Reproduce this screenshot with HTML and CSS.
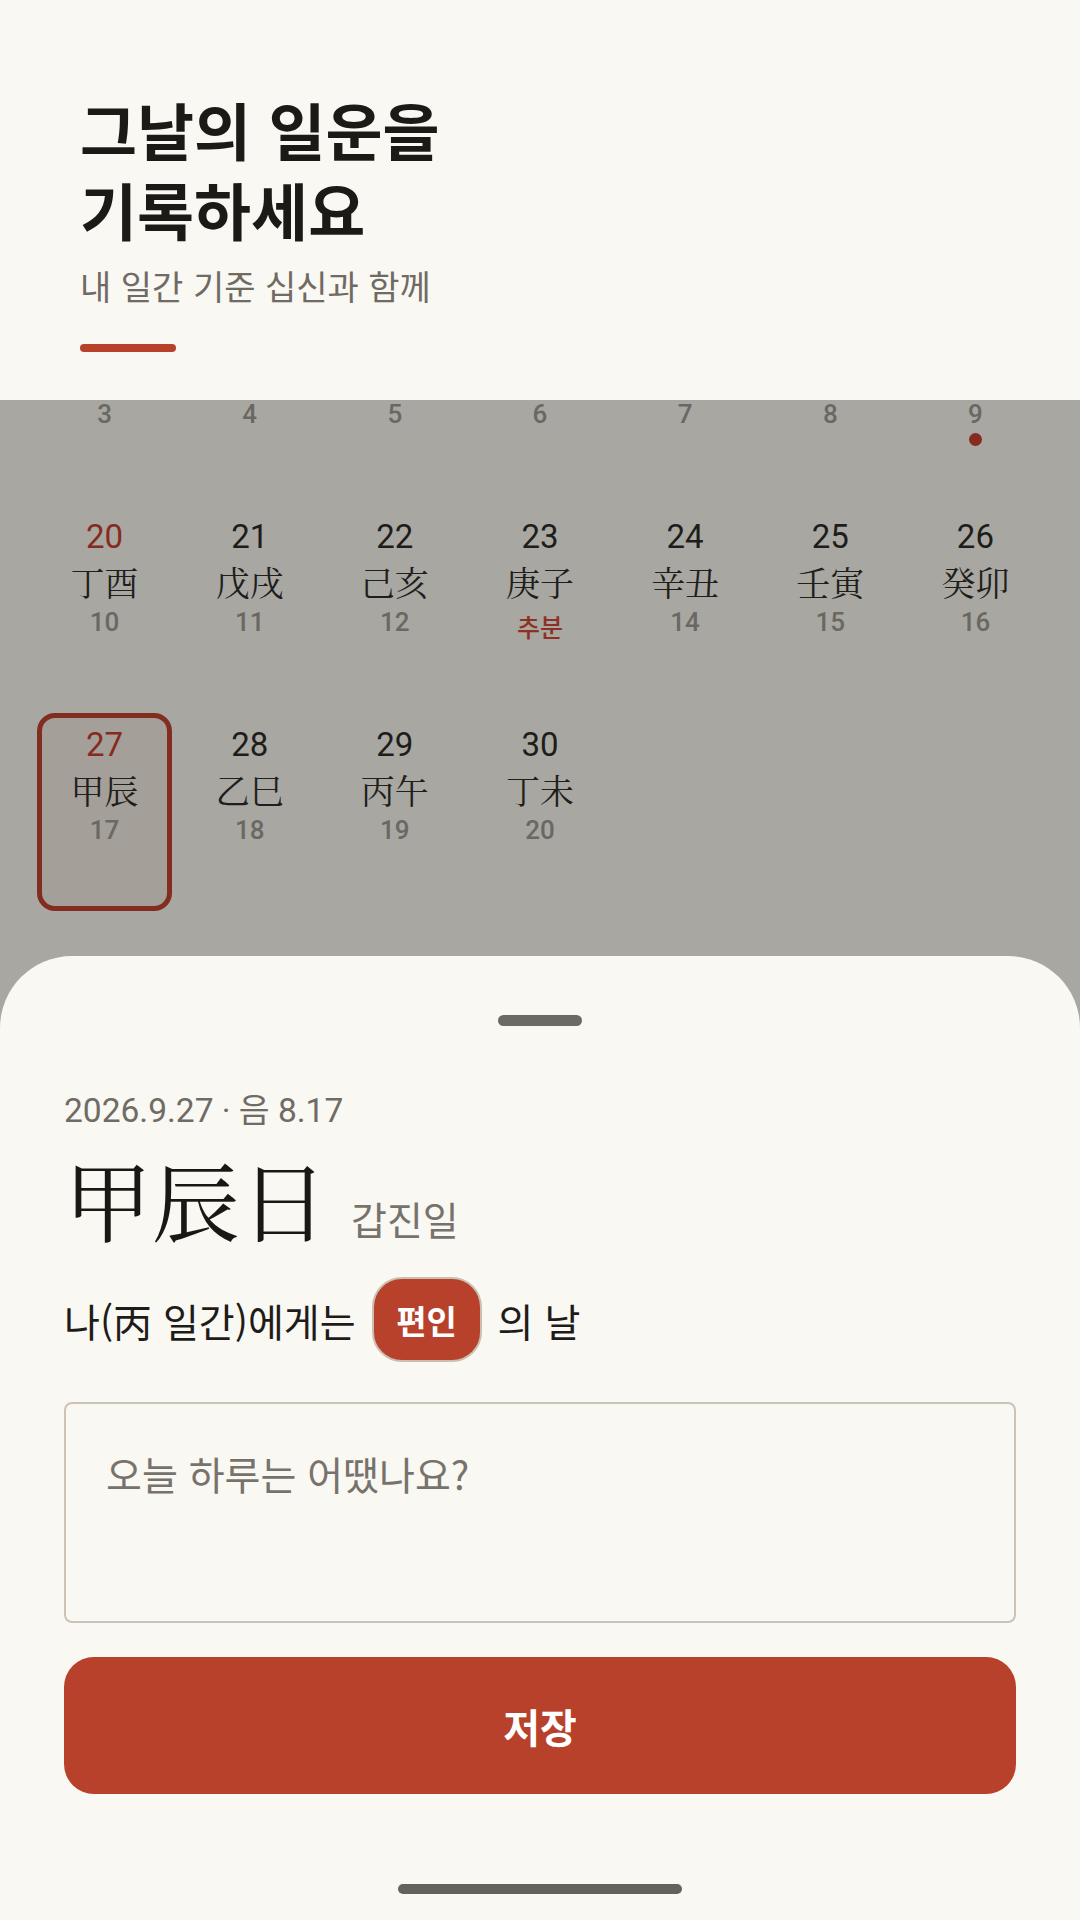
FILE: index.html
```html
<!DOCTYPE html>
<html lang="ko">
<head>
<meta charset="utf-8">
<meta name="viewport" content="width=1080">
<title>일운 기록</title>
<link rel="stylesheet" href="styles.css">
</head>
<body>
<div class="screen">
  <header class="header">
    <h1 class="title"><span class="title-line">그날의 일운을</span><span class="title-line">기록하세요</span></h1>
    <p class="subtitle">내 일간 기준 십신과 함께</p>
    <div class="accent-bar"></div>
  </header>

  <section class="calendar">
    <div class="cal-grid">
      <div class="cell scrolled"><span class="day">13</span><span class="ganji">庚寅</span><span class="lunar">3</span></div>
      <div class="cell scrolled"><span class="day">14</span><span class="ganji">辛卯</span><span class="lunar">4</span></div>
      <div class="cell scrolled"><span class="day">15</span><span class="ganji">壬辰</span><span class="lunar">5</span></div>
      <div class="cell scrolled"><span class="day">16</span><span class="ganji">癸巳</span><span class="lunar">6</span></div>
      <div class="cell scrolled"><span class="day">17</span><span class="ganji">甲午</span><span class="lunar">7</span></div>
      <div class="cell scrolled"><span class="day">18</span><span class="ganji">乙未</span><span class="lunar">8</span></div>
      <div class="cell scrolled"><span class="day">19</span><span class="ganji">丙申</span><span class="lunar">9</span><span class="dot"></span></div>

      <div class="cell"><span class="day red">20</span><span class="ganji">丁酉</span><span class="lunar">10</span></div>
      <div class="cell"><span class="day">21</span><span class="ganji">戊戌</span><span class="lunar">11</span></div>
      <div class="cell"><span class="day">22</span><span class="ganji">己亥</span><span class="lunar">12</span></div>
      <div class="cell"><span class="day">23</span><span class="ganji">庚子</span><span class="lunar term">추분</span></div>
      <div class="cell"><span class="day">24</span><span class="ganji">辛丑</span><span class="lunar">14</span></div>
      <div class="cell"><span class="day">25</span><span class="ganji">壬寅</span><span class="lunar">15</span></div>
      <div class="cell"><span class="day">26</span><span class="ganji">癸卯</span><span class="lunar">16</span></div>

      <div class="cell selected"><span class="day red">27</span><span class="ganji">甲辰</span><span class="lunar">17</span></div>
      <div class="cell"><span class="day">28</span><span class="ganji">乙巳</span><span class="lunar">18</span></div>
      <div class="cell"><span class="day">29</span><span class="ganji">丙午</span><span class="lunar">19</span></div>
      <div class="cell"><span class="day">30</span><span class="ganji">丁未</span><span class="lunar">20</span></div>
    </div>
  </section>

  <section class="sheet">
    <div class="handle"></div>
    <p class="date">2026.9.27 · 음 8.17</p>
    <div class="day-title">
      <span class="day-hanja">甲辰日</span>
      <span class="day-hangul">갑진일</span>
    </div>
    <div class="shishin">
      <span>나(丙 일간)에게는</span>
      <span class="chip">편인</span>
      <span>의 날</span>
    </div>
    <textarea class="memo" placeholder="오늘 하루는 어땠나요?"></textarea>
    <button class="save">저장</button>
    <div class="nav-pill"></div>
  </section>
</div>
</body>
</html>
```

FILE: styles.css
```css
* { box-sizing: border-box; }

html, body {
  margin: 0;
  padding: 0;
}

body {
  width: 1080px;
  height: 1920px;
  overflow: hidden;
  background: #faf8f2;
  font-family: Roboto, "Noto Sans CJK KR", sans-serif;
  color: #1c1a16;
}

.screen {
  position: relative;
  width: 1080px;
  height: 1920px;
  overflow: hidden;
  display: flex;
  flex-direction: column;
}

/* ---------- header ---------- */
.header {
  position: relative;
  z-index: 1;
  flex: 0 0 400px;
  padding: 89px 80px 0;
  background: #faf8f2;
}

.title {
  margin: 0;
  display: flex;
  flex-direction: column;
  font-family: "Noto Sans CJK KR", sans-serif;
  font-weight: 700;
  font-size: 62px;
  color: #1c1a16;
}

.title-line {
  display: block;
  line-height: 80px;
}

.subtitle {
  margin: 15px 0 0;
  font-family: "Noto Sans CJK KR", sans-serif;
  font-size: 34px;
  line-height: 44px;
  color: #6f6b64;
}

.accent-bar {
  margin-top: 36px;
  width: 96px;
  height: 8px;
  border-radius: 4px;
  background: #b8412c;
}

/* ---------- calendar (dimmed under sheet) ---------- */
.calendar {
  flex: 1 1 auto;
  overflow: hidden;
  background: #a8a7a2;
  padding: 0 37px;
}

.cal-grid {
  margin-top: -103px;
  display: grid;
  grid-template-columns: repeat(7, 1fr);
  column-gap: 10px;
  row-gap: 10px;
}

.cell {
  height: 198px;
  border: 5px solid transparent;
  border-radius: 18px;
  padding-top: 7px;
  display: flex;
  flex-direction: column;
  align-items: center;
}

/* row scrolled up under the header: only its lunar line is still visible */
.cell.scrolled .day,
.cell.scrolled .ganji {
  visibility: hidden;
}

.cell.selected {
  border-color: #832c20;
  background: #a49f99;
}

.day {
  font-size: 33px;
  line-height: 40px;
  color: #1e1d1a;
}

.day.red { color: #862b20; }

.ganji {
  font-family: "Noto Serif CJK KR", "Noto Serif CJK SC", "Noto Sans CJK KR", serif;
  font-size: 34px;
  line-height: 50px;
  color: #1f1e1b;
}

.lunar {
  font-size: 26px;
  line-height: 30px;
  font-weight: 500;
  color: #6b6863;
}

.lunar.term {
  margin-top: 4px;
  font-family: "Noto Sans CJK KR", sans-serif;
  font-size: 25px;
  font-weight: 500;
  color: #8e3124;
}

.dot {
  margin-top: 4px;
  width: 13px;
  height: 13px;
  border-radius: 50%;
  background: #862b20;
}

/* ---------- bottom sheet ---------- */
.sheet {
  position: absolute;
  z-index: 2;
  left: 0;
  right: 0;
  top: 956px;
  bottom: 0;
  background: #faf8f2;
  border-radius: 72px 72px 0 0;
  padding: 0 64px;
  display: flex;
  flex-direction: column;
}

.handle {
  align-self: center;
  margin-top: 59px;
  width: 84px;
  height: 11px;
  border-radius: 6px;
  background: #6d6a64;
}

.date {
  margin: 65px 0 0;
  font-size: 33.5px;
  line-height: 40px;
  color: #6f6b65;
}

.day-title {
  margin-top: 16px;
  display: flex;
  align-items: baseline;
}

.day-hanja {
  font-family: "Noto Serif CJK KR", "Noto Serif CJK SC", "Noto Sans CJK KR", serif;
  font-size: 88px;
  line-height: 100px;
  color: #1a1814;
}

.day-hangul {
  margin-left: 23px;
  font-family: "Noto Sans CJK KR", sans-serif;
  font-size: 39px;
  color: #77736c;
}

.shishin {
  margin-top: 30px;
  height: 85px;
  display: flex;
  align-items: center;
  font-family: "Noto Sans CJK KR", sans-serif;
  font-size: 39px;
  color: #1e1c19;
}

.chip {
  margin: 0 16px 0 16px;
  width: 110px;
  height: 85px;
  border: 2px solid #cbbfb2;
  border-radius: 30px;
  background: #b8412c;
  color: #ffffff;
  font-size: 33px;
  font-weight: 700;
  display: flex;
  align-items: center;
  justify-content: center;
}

.memo {
  margin-top: 40px;
  width: 100%;
  height: 221px;
  border: 2px solid #cdc3b5;
  border-radius: 8px;
  padding: 43px 40px;
  background: transparent;
  resize: none;
  outline: none;
  font-family: "Noto Sans CJK KR", sans-serif;
  font-size: 39px;
  line-height: 52px;
  color: #1e1c19;
}

.memo::placeholder {
  color: #77736c;
}

.save {
  margin-top: 34px;
  width: 100%;
  height: 137px;
  border: none;
  border-radius: 30px;
  background: #b8412c;
  color: #ffffff;
  font-family: "Noto Sans CJK KR", sans-serif;
  font-size: 40px;
  font-weight: 700;
}

.nav-pill {
  align-self: center;
  margin-top: 90px;
  width: 284px;
  height: 10px;
  border-radius: 5px;
  background: #65625c;
}
```
